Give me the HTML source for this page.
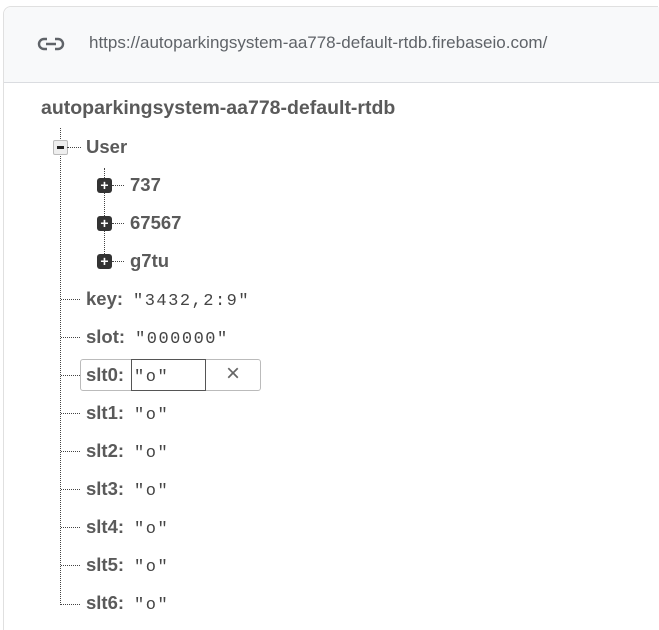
<!DOCTYPE html>
<html style="overflow:hidden;height:630px"><head><style>
body{margin:0;width:659px;height:630px;background:#fff;position:relative;overflow:hidden;font-family:"Liberation Sans",sans-serif}
.card{position:absolute;left:3px;top:6px;width:655px;height:624px;border:1px solid #e0e0e0;border-bottom:none;border-right:none;border-top-left-radius:8px;background:#fff;box-sizing:border-box}
.hdr{position:absolute;left:4px;top:7px;width:655px;height:75px;background:#f8f9fa;border-bottom:1px solid #dadce0;border-top-left-radius:8px}
.url{position:absolute;left:89px;top:33px;font-size:17px;color:#5f6368}
.root{position:absolute;left:41px;top:97px;font-size:19.5px;font-weight:bold;color:#5a5a5a}
.row{position:absolute;height:38px;line-height:38px;font-size:18.5px;font-weight:bold;color:#5a5a5a;white-space:nowrap}
.v{font-family:"Liberation Mono",monospace;font-weight:normal;font-size:17px;color:#444;margin-left:10px;letter-spacing:1.5px}
.vl{position:absolute;border-left:1px dotted #444}
.hl{position:absolute;border-top:1px dotted #444;height:0}
.plus{position:absolute;width:15px;height:15px;background:#333;border-radius:3px;color:#fff;font-size:14px;line-height:15px;text-align:center;font-weight:bold}
</style></head><body>
<div class="card"></div>
<div class="hdr"></div>
<svg style="position:absolute;left:37px;top:36px" width="28" height="16" viewBox="0 0 28 16"><path d="M10 3H7a5 5 0 0 0 0 10h3M18 3h3a5 5 0 0 1 0 10h-3M9 8h10" stroke="#5f6368" stroke-width="2.4" fill="none"/></svg>
<div class="url">https://autoparkingsystem-aa778-default-rtdb.firebaseio.com/</div>
<div class="root">autoparkingsystem-aa778-default-rtdb</div>

<div class="vl" style="left:60px;top:128px;height:477px"></div>
<div class="vl" style="left:104px;top:168px;height:94px"></div>

<div style="position:absolute;left:53px;top:140px;width:13px;height:13px;border:1px solid #bbb;background:#eee;border-radius:2px"><div style="position:absolute;left:3px;top:5px;width:7px;height:3px;background:#222"></div></div>
<div class="hl" style="left:67px;top:147px;width:14px"></div>
<div class="row" style="left:86px;top:128px">User</div>

<div class="plus" style="left:97px;top:178px">+</div><div class="hl" style="left:112px;top:185px;width:12px"></div><div class="row" style="left:130px;top:166px">737</div>
<div class="plus" style="left:97px;top:216px">+</div><div class="hl" style="left:112px;top:223px;width:12px"></div><div class="row" style="left:130px;top:204px">67567</div>
<div class="plus" style="left:97px;top:254px">+</div><div class="hl" style="left:112px;top:261px;width:12px"></div><div class="row" style="left:130px;top:242px">g7tu</div>

<div class="hl" style="left:61px;top:299px;width:19px"></div><div class="row" style="left:86px;top:280px">key:<span class="v">"3432,2:9"</span></div>
<div class="hl" style="left:61px;top:337px;width:19px"></div><div class="row" style="left:86px;top:318px">slot:<span class="v">"000000"</span></div>

<div class="hl" style="left:61px;top:375px;width:19px"></div>
<div style="position:absolute;left:80px;top:359px;width:179px;height:30px;border:1px solid #bbb;border-radius:3px"></div>
<div style="position:absolute;left:131px;top:359px;width:73px;height:30px;border:1px solid #555"></div>
<div class="row" style="left:86px;top:356px">slt0:<span class="v" style="margin-left:10px">"o"</span></div>
<div style="position:absolute;left:226px;top:360px;font-size:24px;color:#666;line-height:28px">×</div>

<div class="hl" style="left:61px;top:413px;width:19px"></div><div class="row" style="left:86px;top:394px">slt1:<span class="v">"o"</span></div>
<div class="hl" style="left:61px;top:451px;width:19px"></div><div class="row" style="left:86px;top:432px">slt2:<span class="v">"o"</span></div>
<div class="hl" style="left:61px;top:489px;width:19px"></div><div class="row" style="left:86px;top:470px">slt3:<span class="v">"o"</span></div>
<div class="hl" style="left:61px;top:527px;width:19px"></div><div class="row" style="left:86px;top:508px">slt4:<span class="v">"o"</span></div>
<div class="hl" style="left:61px;top:565px;width:19px"></div><div class="row" style="left:86px;top:546px">slt5:<span class="v">"o"</span></div>
<div class="hl" style="left:61px;top:604px;width:19px"></div><div class="row" style="left:86px;top:584px">slt6:<span class="v">"o"</span></div>
</body></html>
